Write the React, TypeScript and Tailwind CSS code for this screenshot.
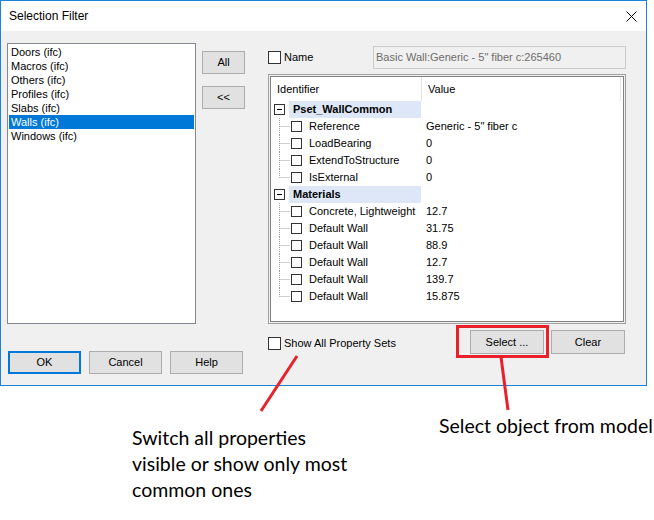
import React from "react";

const items = ["Doors (ifc)", "Macros (ifc)", "Others (ifc)", "Profiles (ifc)", "Slabs (ifc)", "Walls (ifc)", "Windows (ifc)"];

const groups = [
  {
    name: "Pset_WallCommon",
    rows: [
      ["Reference", "Generic - 5\" fiber c"],
      ["LoadBearing", "0"],
      ["ExtendToStructure", "0"],
      ["IsExternal", "0"],
    ],
  },
  {
    name: "Materials",
    rows: [
      ["Concrete, Lightweight", "12.7"],
      ["Default Wall", "31.75"],
      ["Default Wall", "88.9"],
      ["Default Wall", "12.7"],
      ["Default Wall", "139.7"],
      ["Default Wall", "15.875"],
    ],
  },
];

function Btn({ label, ok }: { label: string; ok?: boolean }) {
  return (
    <div
      className={`flex h-[23px] w-[73px] items-center justify-center bg-[#e1e1e1] text-[11px] text-black ${
        ok ? "border-2 border-[#0078d7]" : "border border-[#adadad]"
      }`}
    >
      {label}
    </div>
  );
}

function Check({ size = 13 }: { size?: number }) {
  return (
    <span
      className="block shrink-0 border border-[#333333] bg-white"
      style={{ width: size, height: size }}
    />
  );
}

// tree guide: vertical dotted line + horizontal branch
function Guide({ last }: { last: boolean }) {
  return (
    <svg width="17" height="17" className="shrink-0">
      <line x1="5.5" y1="0" x2="5.5" y2={last ? 8.5 : 17} stroke="#a0a0a0" strokeDasharray="1 1" />
      <line x1="5.5" y1="8.5" x2="16" y2="8.5" stroke="#a0a0a0" strokeDasharray="1 1" />
    </svg>
  );
}

function Minus() {
  return (
    <svg width="11" height="11" className="shrink-0">
      <rect x="0.5" y="0.5" width="10" height="10" fill="white" stroke="#333" />
      <line x1="3" y1="5.5" x2="8" y2="5.5" stroke="#000" />
    </svg>
  );
}

export default function App() {
  return (
    <div
      className="relative h-[520px] w-[654px] overflow-hidden bg-white text-black"
      style={{ fontFamily: '"Liberation Sans", Arial, sans-serif' }}
    >
      {/* window */}
      <div className="flex h-[386px] w-[647px] flex-col border border-[#1883d7]">
        <div className="flex h-[30px] shrink-0 items-center justify-between bg-white pl-[8px] pr-[9px]">
          <span className="text-[12px]">Selection Filter</span>
          <svg width="11" height="11" viewBox="0 0 11 11">
            <path d="M0.5 0.5 L10.5 10.5 M10.5 0.5 L0.5 10.5" stroke="#000" strokeWidth="1" />
          </svg>
        </div>

        <div className="flex flex-1 bg-[#f0f0f0] pl-[6px] text-[11px]">
          {/* left column */}
          <div className="flex w-[189px] shrink-0 flex-col pt-[12px]">
            <div className="h-[281px] w-[189px] border border-[#828790] bg-white p-[1px]">
              {items.map((it) => (
                <div
                  key={it}
                  className={`flex h-[14px] items-center pl-[2px] ${
                    it === "Walls (ifc)" ? "bg-[#0078d7] text-white" : ""
                  }`}
                >
                  {it}
                </div>
              ))}
            </div>
            <div className="mt-[27px] flex w-max gap-[8px] pl-[1px]">
              <Btn label="OK" ok />
              <Btn label="Cancel" />
              <Btn label="Help" />
            </div>
          </div>

          {/* middle buttons */}
          <div className="ml-[6px] flex flex-col gap-[12px] pt-[20px]">
            <div className="flex h-[23px] w-[43px] items-center justify-center border border-[#adadad] bg-[#e1e1e1]">All</div>
            <div className="flex h-[23px] w-[43px] items-center justify-center border border-[#adadad] bg-[#e1e1e1]">&lt;&lt;</div>
          </div>

          {/* right column */}
          <div className="ml-[23px] flex w-[358px] flex-col pt-[15px]">
            <div className="flex h-[23px] items-center">
              <Check />
              <span className="ml-[3px]">Name</span>
              <div className="ml-auto flex h-[23px] w-[253px] items-center border border-[#cccccc] bg-[#f0f0f0] pl-[2px] text-[#6d6d6d]">
                Basic Wall:Generic - 5" fiber c:265460
              </div>
            </div>

            <div className="mt-[5px] h-[250px] border border-[#a0a0a0] bg-[#f0f0f0] p-[1px]">
              <div className="h-full border border-[#828282] bg-white">
                <div className="flex h-[24px] items-center">
                  <div className="w-[150px] pl-[6px]">Identifier</div>
                  <div className="flex h-full flex-1 items-center border-l border-[#e5e5e5] pl-[6px]">
                    <span className="flex-1">Value</span>
                    <span className="mr-[2px] h-full w-px bg-[#e5e5e5]" />
                  </div>
                </div>
                {groups.map((g) => (
                  <div key={g.name}>
                    <div className="flex h-[17px] items-center pl-[3px]">
                      <Minus />
                      <div className="ml-[4px] flex h-full w-[132px] items-center bg-[#dde7f8] pl-[4px] font-bold">
                        {g.name}
                      </div>
                    </div>
                    {g.rows.map(([id, val], i) => (
                      <div key={id + val} className="flex h-[17px] items-center pl-[3px]">
                        <Guide last={i === g.rows.length - 1} />
                        <Check size={11} />
                        <span className="ml-[7px] w-[112px] whitespace-nowrap">{id}</span>
                        <span className="ml-[5px]">{val}</span>
                      </div>
                    ))}
                  </div>
                ))}
              </div>
            </div>

            <div className="mt-[6px] flex items-start">
              <div className="mt-[5px] flex items-center">
                <Check />
                <span className="ml-[3px]">Show All Property Sets</span>
              </div>
              <div className="relative ml-auto">
                <div className="flex h-[24px] w-[74px] items-center justify-center border border-[#adadad] bg-[#e1e1e1]">Select ...</div>
                <span className="absolute -left-[14px] -top-[5px] h-[33px] w-[93px] border-[3px] border-[#e8212b]" />
              </div>
              <div className="ml-[7px] mr-[1px] flex h-[24px] w-[74px] items-center justify-center border border-[#adadad] bg-[#e1e1e1]">Clear</div>
            </div>
          </div>
        </div>
      </div>

      {/* annotations */}
      <div
        className="flex text-[19.5px] leading-[26px] text-black"
        style={{ fontFamily: "Lato, \"Open Sans\", sans-serif" }}
      >
        <div className="ml-[132px] mt-[39px] w-[300px] shrink-0">
          <div>Switch all properties</div>
          <div>visible or show only most</div>
          <div>common ones</div>
        </div>
        <div className="ml-[7px] mt-[27px] whitespace-nowrap">Select object from model</div>
      </div>

      {/* arrows */}
      <svg className="pointer-events-none absolute left-0 top-0" width="654" height="520">
        <path d="M297 356 L261 411" stroke="#e8212b" strokeWidth="3" fill="none" />
        <path d="M501 357 L504 380 L508 410" stroke="#e8212b" strokeWidth="3" fill="none" />
      </svg>
    </div>
  );
}
